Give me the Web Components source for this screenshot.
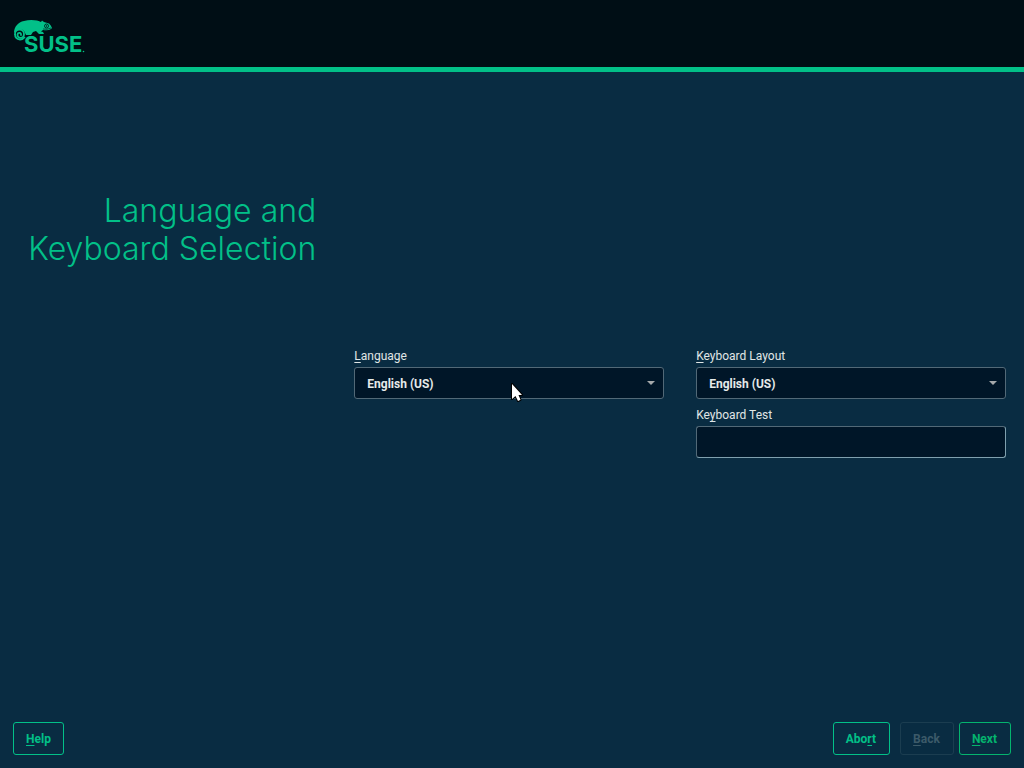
<!DOCTYPE html>
<html lang="en">
<head>
<meta charset="utf-8">
<title>Language and Keyboard Selection</title>
<style>
  :root { --bg: #092c42; --field: #001628; --green: #02c088; --line: #526977; --text: #e0e6e6; }
  html, body { height: 100%; margin: 0; }
  body { background: var(--bg); font: 12px/16px Roboto, sans-serif; color: var(--text); }
</style>
</head>
<body>
<installer-page>
  <suse-logo slot="logo"></suse-logo>
  <page-title slot="title">Language and Keyboard Selection</page-title>
  <choice-field slot="left" before="" key="L" after="anguage" value="English (US)"></choice-field>
  <choice-field slot="right" before="" key="K" after="eyboard Layout" value="English (US)"></choice-field>
  <entry-field slot="right" before="Ke" key="y" after="board Test"></entry-field>
  <action-button slot="help" before="" key="H" after="elp"></action-button>
  <action-button slot="actions" class="wide" before="Abo" key="r" after="t"></action-button>
  <action-button slot="actions" class="wide back" before="" key="B" after="ack" disabled></action-button>
  <action-button slot="actions" class="wide next" before="" key="N" after="ext" primary></action-button>
</installer-page>
<mouse-pointer></mouse-pointer>

<script>
class Base extends HTMLElement {
  connectedCallback() {
    if (!this.shadowRoot) this.attachShadow({ mode: 'open' }).innerHTML = this.render();
  }
  a(name) { return this.getAttribute(name) || ''; }
  get caption() { return `${this.a('before')}<u>${this.a('key')}</u>${this.a('after')}`; }
}
const underline = 'u { text-decoration: underline; text-decoration-thickness: 1px; text-underline-offset: 2px; text-decoration-skip-ink: none; }';

customElements.define('installer-page', class extends Base {
  render() { return `
    <style>
      :host { display: flex; flex-direction: column; min-height: 100vh; }
      header { box-sizing: border-box; height: 72px; padding: 18px 12px 0; border-bottom: 5px solid var(--green); background: #000e15; }
      main { flex: 1; display: grid; grid-template-columns: 1fr 2fr; }
      .side { padding: 120px 25px 0 16px; }
      .fields { display: grid; grid-template-columns: 1fr 1fr; gap: 32px; align-content: center; padding: 12px 18px 0 13px; }
      .column { display: flex; flex-direction: column; gap: 8px; }
      footer { display: flex; justify-content: space-between; padding: 0 13px 13px; }
      .actions { display: flex; }
    </style>
    <header><slot name="logo"></slot></header>
    <main>
      <div class="side"><slot name="title"></slot></div>
      <div class="fields">
        <div class="column"><slot name="left"></slot></div>
        <div class="column"><slot name="right"></slot></div>
      </div>
    </main>
    <footer><slot name="help"></slot><div class="actions"><slot name="actions"></slot></div></footer>`; }
});

customElements.define('page-title', class extends Base {
  render() { return `
    <style>
      :host { display: block; }
      h1 { margin: 0; font: 300 32px/38px Inter, sans-serif; color: var(--green); text-align: right; }
    </style>
    <h1><slot></slot></h1>`; }
});

const fieldStyle = `
  :host { display: flex; flex-direction: column; gap: 3px; }
  label { line-height: 16px; }
  select, input { box-sizing: border-box; width: 100%; height: 32px; margin: 0; padding: 2px 12px 0; border: 1px solid var(--line);
    border-radius: 3px; background: var(--field); color: #e6eaea; font: 700 12px/16px Roboto, sans-serif; appearance: none; }
  ${underline}`;

customElements.define('choice-field', class extends Base {
  render() { return `
    <style>${fieldStyle}
      .box { position: relative; display: flex; }
      svg { position: absolute; right: 9px; top: 14px; pointer-events: none; }
    </style>
    <label for="c">${this.caption}</label>
    <div class="box">
      <select id="c"><option>${this.a('value')}</option></select>
      <svg width="8" height="4" viewBox="0 0 8 4"><path d="M0 0h8L4 4z" fill="#a5a9ab"/></svg>
    </div>`; }
});

customElements.define('entry-field', class extends Base {
  render() { return `
    <style>${fieldStyle}
      input { border-right-color: #7fa0ae; border-bottom-color: #7fa0ae; }
    </style>
    <label for="t">${this.caption}</label>
    <input id="t" type="text">`; }
});

customElements.define('action-button', class extends Base {
  render() { return `
    <style>
      :host { display: block; }
      :host(.back) { margin-left: 10px; }
      :host(.next) { margin-left: 5px; }
      button { display: block; height: 33px; margin: 0; padding: 0 12px; border: 1px solid var(--green); border-radius: 3px;
        background: transparent; color: var(--green); font: 700 12px/16px Roboto, sans-serif; }
      :host(.wide) button { padding-right: 13px; }
      button:disabled { border-color: #1b3d50; color: #3c5a69; }
      :host([primary]) button { border-color: #04b46e; color: #04b46e; }
      ${underline}
    </style>
    <button type="button" ${this.hasAttribute('disabled') ? 'disabled' : ''}>${this.caption}</button>`; }
});

customElements.define('suse-logo', class extends Base {
  render() { return `
    <style>
      :host { display: block; width: 74px; height: 44px; }
      svg { display: block; overflow: visible; }
      text { font: 700 22px Inter, sans-serif; }
    </style>
    <svg width="74" height="44" viewBox="12 18 74 44" fill="#02c088" role="img" aria-label="SUSE">
      <path d="M14 33C14 27 18 22 24 21C30 19 38 20 41 22L42 20.500L44 22L49 23.500Q51 25 52 28L51 29Q48 31 43 30L41 31.500L43 32L44 34H39L36 31L33 32L31 35H26L24 31Q20 27 16 31z"/>
      <path d="M15 34C15 28 24 28 24 34C24 39 17 39 17.500 34.500C18 32 21.500 32.500 21 35" fill="none" stroke="#02c088" stroke-width="1.800" stroke-linecap="round"/>
      <path d="M15 34Q15 39 20 39.500Q23 39.500 25 37" fill="none" stroke="#02c088" stroke-width="1.800"/>
      <circle cx="46.500" cy="26" r="2" fill="none" stroke="#000e15" stroke-width="0.800"/>
      <circle cx="46.500" cy="26" r="0.700" fill="#000e15"/>
      <path d="M43 29Q47 30 51 28" fill="none" stroke="#000e15" stroke-width="0.600"/>
      <text x="24" y="52" stroke="#000e15" stroke-width="1" paint-order="stroke">SUSE</text>
      <circle cx="83.500" cy="51.500" r="0.800"/>
    </svg>`; }
});

customElements.define('mouse-pointer', class extends Base {
  render() { return `
    <style>
      :host { position: absolute; left: 50%; top: 50%; pointer-events: none; }
      svg { display: block; overflow: visible; }
    </style>
    <svg width="12" height="18" viewBox="0 0 12 18"><path d="M0 0V15L3.500 12L6 17L8.500 15.800L6.500 11H10z" fill="#fff" stroke="#000" stroke-width="2" stroke-linejoin="round" paint-order="stroke"/></svg>`; }
});
</script>
</body>
</html>
